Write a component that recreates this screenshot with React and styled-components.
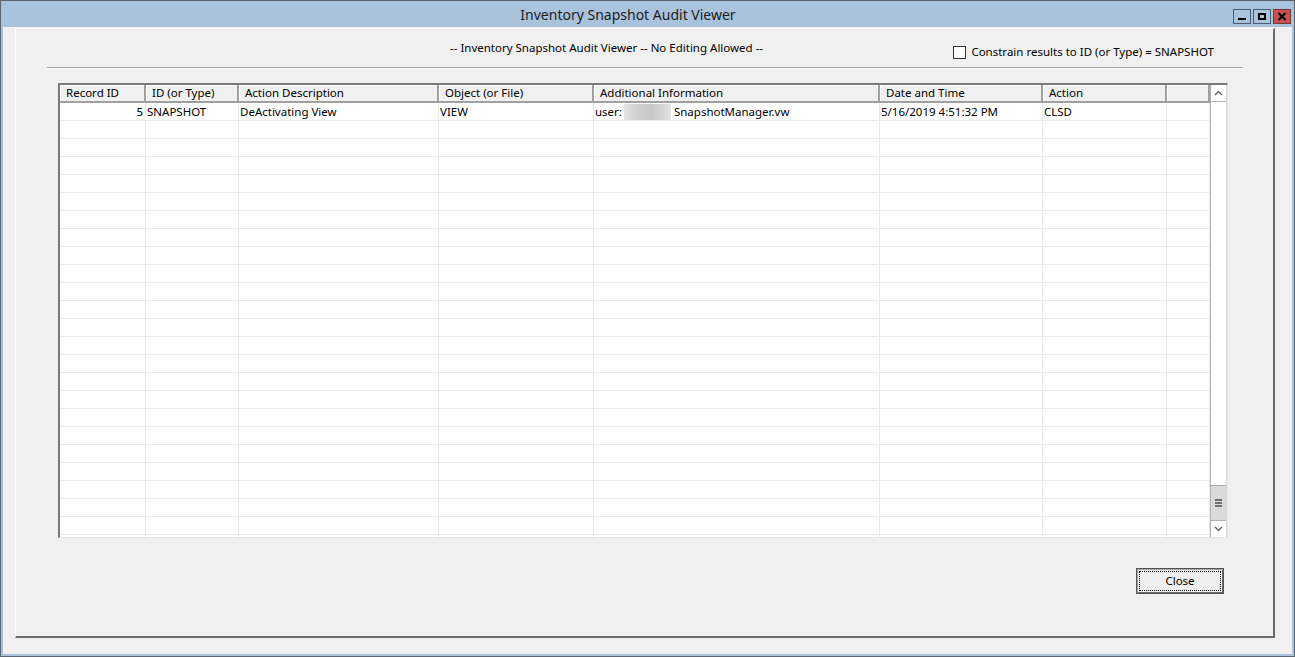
import React from 'react';
import styled, { createGlobalStyle } from 'styled-components';

const GlobalStyle = createGlobalStyle`
  html, body {
    margin: 0;
    padding: 0;
    background: #ffffff;
  }
  body {
    font-family: 'Noto Sans', 'Liberation Sans', Arial, sans-serif;
    color: #000;
  }
`;

const Window = styled.div`
  width: 1295px;
  height: 657px;
  box-sizing: border-box;
  border: 1px solid #5b6571;
  background: #aac3dd;
  padding: 0 2px 2px;
  display: flex;
  flex-direction: column;
`;

const TitleBar = styled.div`
  height: 26px;
  display: flex;
  align-items: center;
`;

const Title = styled.div`
  flex: 1;
  text-align: center;
  padding-left: 20px;
  font-size: 14px;
  color: #1c1c1c;
  line-height: 20px;
  margin-top: 1px;
`;

const Controls = styled.div`
  display: flex;
  gap: 2px;
  align-self: flex-start;
  margin-top: 8px;
  margin-right: 1px;
`;

const CaptionButton = styled.div`
  width: 18px;
  height: 15px;
  box-sizing: border-box;
  border: 1px solid ${p => (p.$close ? '#7b3a32' : '#4c5d73')};
  background: ${p => (p.$close ? '#c75050' : 'transparent')};
  display: flex;
  align-items: center;
  justify-content: center;
`;

const Client = styled.div`
  flex: 1;
  background: #f0f0f0;
  padding: 1px 17px 16px 12px;
  display: flex;
  flex-direction: column;
  min-height: 0;
`;

const Panel = styled.div`
  flex: 1;
  box-sizing: border-box;
  border-style: solid;
  border-width: 1px 2px 2px 1px;
  border-color: #ffffff #6b6b6b #6b6b6b #ffffff;
  display: flex;
  flex-direction: column;
`;

const TopRow = styled.div`
  height: 38px;
  display: flex;
  align-items: flex-start;
  font-size: 11.5px;
  line-height: 16px;
`;

const PanelTitle = styled.div`
  margin-left: 434px;
  margin-top: 11px;
`;

const Constrain = styled.label`
  margin-left: auto;
  margin-right: 59px;
  margin-top: 15px;
  display: flex;
  align-items: center;
  gap: 5px;
`;

const CheckBox = styled.span`
  width: 13px;
  height: 13px;
  box-sizing: border-box;
  border: 1px solid #333333;
  background: #ffffff;
`;

const Separator = styled.div`
  margin: 0 30px 0 31px;
  border-top: 1px solid #a0a0a0;
  border-bottom: 1px solid #ffffff;
`;

const Grid = styled.div`
  margin: 14px 0 0 42px;
  width: 1170px;
  height: 455px;
  box-sizing: border-box;
  border-style: solid;
  border-width: 2px 1px 1px 2px;
  border-color: #7a7a7a #e6e6e6 #e6e6e6 #7a7a7a;
  display: flex;
  background: #ffffff;
`;

const Table = styled.div`
  flex: 1;
  overflow: hidden;
  font-size: 11.5px;
`;

const HeaderRow = styled.div`
  display: flex;
  height: 18px;
  box-sizing: border-box;
  border-bottom: 2px solid #a0a0a0;
  background: #f0f0f0;
`;

const HeaderCell = styled.div`
  width: ${p => p.$w}px;
  flex: none;
  box-sizing: border-box;
  height: 16px;
  line-height: 16px;
  padding-left: 6px;
  border-right: 2px solid #a0a0a0;
  box-shadow: inset 1px 1px #ffffff;
  white-space: nowrap;
  overflow: hidden;
`;

const Row = styled.div`
  display: flex;
  height: 18px;
  box-sizing: border-box;
  border-bottom: 1px solid #e9e9e9;
`;

const Cell = styled.div`
  width: ${p => p.$w}px;
  flex: none;
  box-sizing: border-box;
  line-height: 17px;
  padding: 0 2px 0 1px;
  border-right: 1px solid #e9e9e9;
  white-space: nowrap;
  overflow: hidden;
  display: flex;
  align-items: center;
  justify-content: ${p => (p.$align === 'right' ? 'flex-end' : 'flex-start')};
`;

const Blur = styled.span`
  display: inline-block;
  width: 47px;
  height: 16px;
  margin: 0 3px 0 2px;
  background: linear-gradient(90deg, #e4e4e4, #cdcdcd 30%, #c8c8c8 60%, #e2e2e2);
`;

const Scrollbar = styled.div`
  width: 17px;
  flex: none;
  box-sizing: border-box;
  border-left: 1px solid #b4b4b4;
  border-right: 1px solid #dadada;
  display: flex;
  flex-direction: column;
  background: #ffffff;
`;

const ScrollButton = styled.div`
  height: 17px;
  flex: none;
  box-sizing: border-box;
  border-style: solid;
  border-color: #b4b4b4;
  border-width: ${p => (p.$down ? '1px 0 0 0' : '0 0 1px 0')};
  display: flex;
  align-items: center;
  justify-content: center;
`;

const Track = styled.div`
  flex: 1;
  display: flex;
  flex-direction: column;
  justify-content: flex-end;
`;

const Thumb = styled.div`
  height: 35px;
  box-sizing: border-box;
  border-top: 1px solid #a8a8a8;
  background: #dadada;
  display: flex;
  align-items: center;
  justify-content: center;
`;

const ButtonRow = styled.div`
  display: flex;
  justify-content: flex-end;
  margin-top: 30px;
  padding-right: 49px;
`;

const Button = styled.button`
  width: 88px;
  height: 26px;
  box-sizing: border-box;
  border: 1px solid #555555;
  box-shadow: inset 1px 1px #a0a0a0, inset -1px -1px #6b6b6b;
  background: #efefef;
  padding: 2px;
  font-family: inherit;
  font-size: 11.5px;
  color: #000;
  display: flex;
`;

const Focus = styled.span`
  flex: 1;
  border: 1px dotted #000000;
  display: flex;
  align-items: center;
  justify-content: center;
  line-height: 16px;
`;

const columns = [
  { key: 'rec', label: 'Record ID', w: 86, align: 'right' },
  { key: 'id', label: 'ID (or Type)', w: 93 },
  { key: 'desc', label: 'Action Description', w: 200 },
  { key: 'obj', label: 'Object (or File)', w: 155 },
  { key: 'info', label: 'Additional Information', w: 286 },
  { key: 'date', label: 'Date and Time', w: 163 },
  { key: 'act', label: 'Action', w: 124 },
  { key: 'pad', label: '', w: 43 },
];

const firstRow = {
  rec: '5',
  id: 'SNAPSHOT',
  desc: 'DeActivating View',
  obj: 'VIEW',
  info: (
    <>
      user:<Blur />SnapshotManager.vw
    </>
  ),
  date: '5/16/2019 4:51:32 PM',
  act: 'CLSD',
  pad: '',
};

const rows = [firstRow, ...Array.from({ length: 24 }, () => ({}))];

const Chevron = ({ down }) => (
  <svg width="9" height="6" viewBox="0 0 9 6">
    <polyline
      points={down ? '1,1 4.5,4.5 8,1' : '1,5 4.5,1.5 8,5'}
      fill="none"
      stroke="#606060"
      strokeWidth="1.3"
    />
  </svg>
);

export default function App() {
  return (
    <>
      <GlobalStyle />
      <Window>
        <TitleBar>
          <Title>Inventory Snapshot Audit Viewer</Title>
          <Controls>
            <CaptionButton>
              <svg width="10" height="10" viewBox="0 0 10 10">
                <rect x="1" y="6" width="8" height="2" fill="#000" />
              </svg>
            </CaptionButton>
            <CaptionButton>
              <svg width="10" height="9" viewBox="0 0 10 9">
                <rect x="2" y="2" width="6" height="5" fill="none" stroke="#000" strokeWidth="2" />
              </svg>
            </CaptionButton>
            <CaptionButton $close>
              <svg width="10" height="9" viewBox="0 0 10 9">
                <path d="M1.5 1 L8.5 8 M8.5 1 L1.5 8" stroke="#000" strokeWidth="2" />
              </svg>
            </CaptionButton>
          </Controls>
        </TitleBar>
        <Client>
          <Panel>
            <TopRow>
              <PanelTitle>-- Inventory Snapshot Audit Viewer -- No Editing Allowed --</PanelTitle>
              <Constrain>
                <CheckBox />
                Constrain results to ID (or Type) = SNAPSHOT
              </Constrain>
            </TopRow>
            <Separator />
            <Grid>
              <Table>
                <HeaderRow>
                  {columns.map(c => (
                    <HeaderCell key={c.key} $w={c.w}>{c.label}</HeaderCell>
                  ))}
                </HeaderRow>
                {rows.map((r, i) => (
                  <Row key={i}>
                    {columns.map(c => (
                      <Cell key={c.key} $w={c.w} $align={c.align}>{r[c.key]}</Cell>
                    ))}
                  </Row>
                ))}
              </Table>
              <Scrollbar>
                <ScrollButton>
                  <Chevron />
                </ScrollButton>
                <Track>
                  <Thumb>
                    <svg width="7" height="8" viewBox="0 0 7 8">
                      <rect x="0" y="0" width="7" height="2" fill="#707070" />
                      <rect x="0" y="3" width="7" height="2" fill="#707070" />
                      <rect x="0" y="6" width="7" height="2" fill="#707070" />
                    </svg>
                  </Thumb>
                </Track>
                <ScrollButton $down>
                  <Chevron down />
                </ScrollButton>
              </Scrollbar>
            </Grid>
            <ButtonRow>
              <Button>
                <Focus>Close</Focus>
              </Button>
            </ButtonRow>
          </Panel>
        </Client>
      </Window>
    </>
  );
}
